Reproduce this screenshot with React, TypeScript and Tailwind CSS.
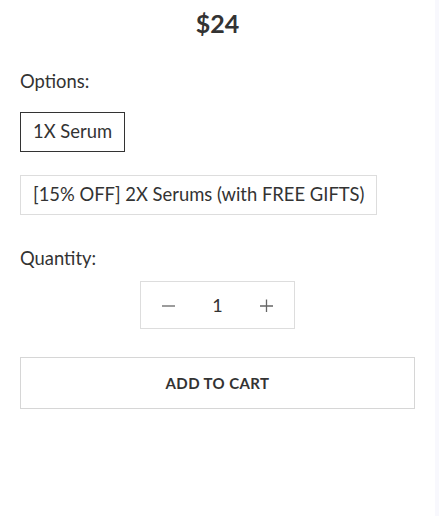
import { useState } from "react"

export default function App() {
    const [qty, setQty] = useState(1)
    const [option, setOption] = useState(0)
    const options = ["1X Serum", "[15% OFF] 2X Serums (with FREE GIFTS)"]

    return (
        <div className="flex min-h-[516px] w-full bg-white text-[#333333]" style={{ fontFamily: "Lato, 'Open Sans', sans-serif" }}>
            <div className="flex-1 px-5">
                <div className="pt-[8px] text-center text-[25px] font-bold leading-[30px]">$24</div>

                <div className="mt-[31px] text-[18.4px] leading-[24px]">Options:</div>
                <div className="mt-[19px] flex flex-col items-start gap-[23px]">
                    {options.map((o, i) => (
                        <button
                            key={o}
                            onClick={() => setOption(i)}
                            className={`h-[40px] border px-3 text-[18.4px] ${option === i ? "border-[#333333]" : "border-[#dddddd]"}`}
                        >
                            {o}
                        </button>
                    ))}
                </div>

                <div className="mt-[31px] text-[18.4px] leading-[24px]">Quantity:</div>
                <div className="mt-[11px] flex justify-center">
                    <div className="flex h-[48px] w-[155px] items-center border border-[#dddddd] px-[3px]">
                        <button onClick={() => setQty(Math.max(1, qty - 1))} className="flex flex-1 justify-center text-[#666666]">
                            <svg width="13" height="13" viewBox="0 0 13 13"><path d="M0 7h13" stroke="currentColor" strokeWidth="1.3" /></svg>
                        </button>
                        <span className="flex-1 text-center text-[18px]">{qty}</span>
                        <button onClick={() => setQty(qty + 1)} className="flex flex-1 justify-center text-[#666666]">
                            <svg width="13" height="13" viewBox="0 0 13 13"><path d="M0 7h13M6.5 0.5v13" stroke="currentColor" strokeWidth="1.3" /></svg>
                        </button>
                    </div>
                </div>

                <button className="mt-[28px] h-[52px] w-full border border-[#d6d6d6] text-[15px] font-bold tracking-[0.4px]">
                    ADD TO CART
                </button>
            </div>
            <div className="w-[4px] bg-[#f8f8fd]" />
        </div>
    )
}
